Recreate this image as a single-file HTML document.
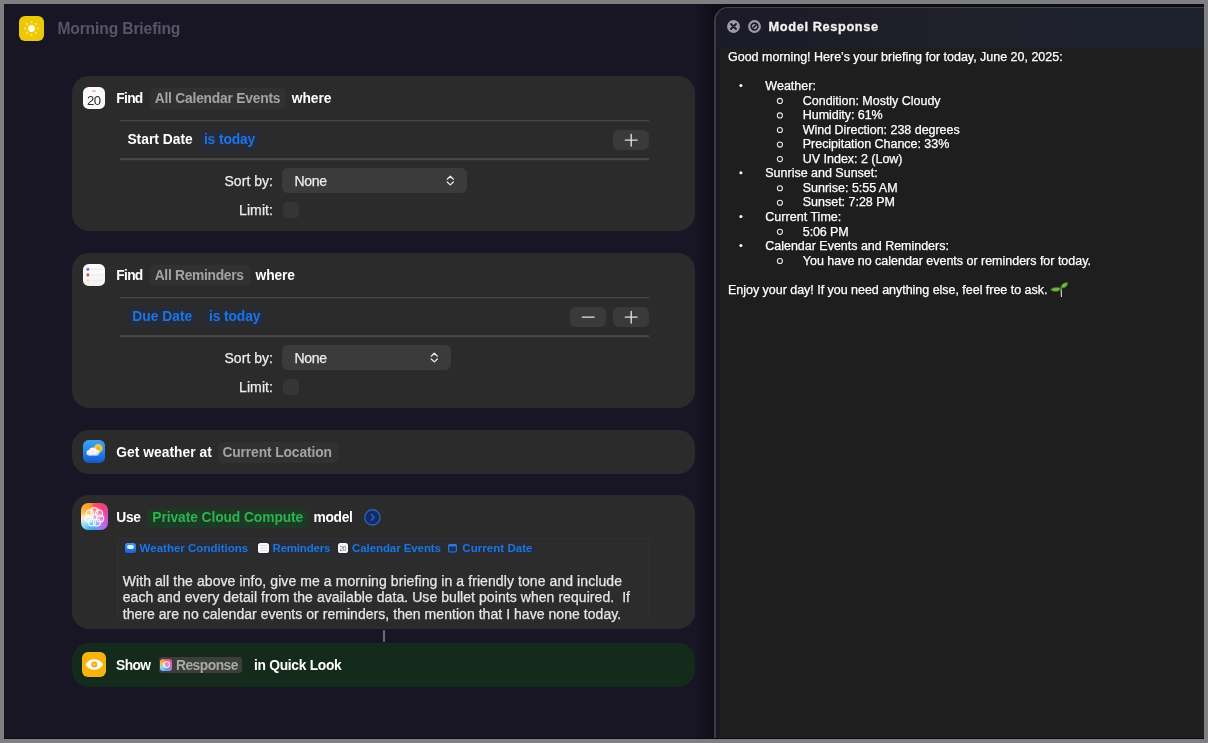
<!DOCTYPE html>
<html>
<head>
<meta charset="utf-8">
<title>Morning Briefing</title>
<style>
*{box-sizing:border-box;margin:0;padding:0}
html,body{width:1208px;height:743px;overflow:hidden;background:#181624}
body{font-family:"Liberation Sans",sans-serif;position:relative;color:#fff}
#layer{position:absolute;left:0;top:0;width:1208px;height:743px;will-change:transform;transform:translateZ(0)}
#frame{position:absolute;left:0;top:0;width:1208px;height:743px;border:4px solid #7f7f81;z-index:50}
.abs{position:absolute}
.t{position:absolute;white-space:pre;line-height:20px;height:20px}
.card{position:absolute;left:72.3px;width:623px;background:#2b2b2b;border-radius:17px}
.pill{position:absolute;border-radius:5px;background:#313131}
.bpill{position:absolute;border-radius:5px;background:#272a37}
.line{position:absolute;left:120px;width:528.5px;height:2px;background:linear-gradient(#474747 0 1px,#343434 1px 2px)}
.line2{position:absolute;left:120px;width:528.5px;height:3px;background:linear-gradient(#434343 0 1px,#494949 1px 2px,#313131 2px 3px)}
.btn{position:absolute;width:35.6px;height:19.5px;border-radius:6px;background:#3a3a3a}
.sel{position:absolute;left:282px;height:25px;border-radius:6px;background:#3b3b3b}
.chk{position:absolute;left:282.5px;width:16px;height:16px;border-radius:4.5px;background:#353535}
svg{position:absolute;overflow:visible}
#panel{position:absolute;left:714px;top:7px;width:496px;height:740px;background:#1e1e1e;border:1px solid #42424a;border-left:2px solid #3c3c49;border-radius:14px 0 0 0;overflow:hidden}
#pstrip{position:absolute;left:0;top:40px;width:4px;height:700px;background:linear-gradient(90deg,#181723 0 3px,#1b1b21 3px 4px)}
#ptitle{position:absolute;left:0;top:0;width:100%;height:40px;background:linear-gradient(90deg,#1b1a27 0%,#1f202a 45%,#1c222c 100%)}
</style>
</head>
<body>
<div id="layer">

<!-- header -->
<div class="abs" style="left:19px;top:15.5px;width:25px;height:25px;border-radius:6px;background:#ecc80a"></div>
<svg style="left:19px;top:15.5px" width="25" height="25" viewBox="0 0 25 25">
 <circle cx="12.5" cy="12.5" r="3.4" fill="#fffbe0"/>
 <g fill="#ffe840">
  <circle cx="12.5" cy="6.1" r="1.15"/><circle cx="12.5" cy="18.9" r="1.15"/>
  <circle cx="6.1" cy="12.5" r="1.15"/><circle cx="18.9" cy="12.5" r="1.15"/>
  <circle cx="8" cy="8" r="1.15"/><circle cx="17" cy="8" r="1.15"/>
  <circle cx="8" cy="17" r="1.15"/><circle cx="17" cy="17" r="1.15"/>
 </g>
</svg>

<!-- cards -->
<div class="card" style="top:75.5px;height:155.5px"></div>
<div class="card" style="top:252.5px;height:155.5px"></div>
<div class="card" style="top:430px;height:43.5px"></div>
<div class="card" style="top:494.5px;height:134.5px"></div>
<div class="abs" style="left:383px;top:630px;width:2px;height:12px;background:#6c6c74;border-radius:1px"></div>
<div class="card" style="top:643px;height:43.5px;background:#142a1b"></div>

<!-- card 1 shapes -->
<div class="pill" style="left:150px;top:88px;width:136px;height:21px"></div>
<div class="line" style="top:120px"></div>
<div class="line2" style="top:158px"></div>
<div class="bpill" style="left:199px;top:129.5px;width:61px;height:20px"></div>
<div class="btn" style="left:613px;top:130px"></div>
<div class="sel" style="top:168px;width:185px"></div>
<div class="chk" style="top:202px"></div>

<!-- card 2 shapes -->
<div class="pill" style="left:150px;top:265px;width:100px;height:21px"></div>
<div class="line" style="top:297px"></div>
<div class="line2" style="top:335px"></div>
<div class="bpill" style="left:127px;top:306.5px;width:70px;height:20px"></div>
<div class="bpill" style="left:204px;top:306.5px;width:61px;height:20px"></div>
<div class="btn" style="left:570px;top:307px"></div>
<div class="btn" style="left:613px;top:307px"></div>
<div class="sel" style="top:345px;width:169px"></div>
<div class="chk" style="top:379px"></div>

<!-- card 3 shapes -->
<div class="pill" style="left:217.5px;top:442px;width:120px;height:20.5px"></div>

<!-- card 4 shapes -->
<div class="pill" style="left:147px;top:508.5px;width:161px;height:19px;background:#1d3a26"></div>
<div class="abs" style="left:117px;top:538px;width:533px;height:83px;background:#2c2c2c;border:1px solid #303030;border-bottom-color:#2c2c2c"></div>

<!-- card 5 shapes -->
<div class="pill" style="left:158.5px;top:657px;width:83px;height:15.5px;border-radius:3px;background:#3a3f3b"></div>

<!--ICONS_BEGIN-->
<!-- calendar icon card1 -->
<div class="abs" style="left:82.7px;top:86.5px;width:22.6px;height:22.6px;border-radius:5.6px;background:#fbfafa"></div>
<div class="abs" style="left:82.7px;top:94.2px;width:22.6px;height:13px;line-height:13px;font-size:13.2px;letter-spacing:-0.6px;text-align:center;color:#2a2a2a;text-indent:-0.4px">20</div>
<div class="abs" style="left:91.5px;top:90.4px;width:4.6px;height:1.6px;background:#f5b3c0;border-radius:1px"></div>

<!-- reminders icon card2 -->
<div class="abs" style="left:82.7px;top:263.6px;width:22.6px;height:22.6px;border-radius:5.6px;background:linear-gradient(180deg,#fdfdfd,#f4f2f0)"></div>
<svg style="left:82.7px;top:263.6px" width="22.6" height="22.6" viewBox="0 0 22.6 22.6">
 <circle cx="4.9" cy="5.3" r="1.55" fill="#5f7fc6"/><circle cx="4.9" cy="10.9" r="1.55" fill="#c45a6a"/><circle cx="4.9" cy="16.3" r="1.5" fill="#f6d9b8"/>
 <g stroke="#e6e6e8" stroke-width="0.9"><path d="M8.6 5.3H20M8.6 10.9H20M8.6 16.3H20"/></g>
</svg>

<!-- weather icon card3 -->
<div class="abs" style="left:82.7px;top:440.2px;width:22.5px;height:23px;border-radius:5.6px;background:linear-gradient(180deg,#3fa2f2 0%,#2b88e8 45%,#1556cb 100%)"></div>
<svg style="left:82.7px;top:440.2px" width="22.5" height="23" viewBox="0 0 22.5 23">
 <defs><radialGradient id="sun"><stop offset="0" stop-color="#f9a60e"/><stop offset="0.5" stop-color="#f9c426"/><stop offset="0.8" stop-color="#f6e25a" stop-opacity="0.7"/><stop offset="1" stop-color="#f6e25a" stop-opacity="0"/></radialGradient>
 <linearGradient id="cl" x1="0" y1="0" x2="0.3" y2="1"><stop offset="0" stop-color="#ffffff"/><stop offset="0.55" stop-color="#eef4fb"/><stop offset="1" stop-color="#a9cdf3"/></linearGradient></defs>
 <circle cx="15.2" cy="8.4" r="5" fill="url(#sun)"/>
 <g fill="url(#cl)"><circle cx="6.4" cy="12.8" r="2.9"/><circle cx="9.8" cy="11.1" r="3.7"/><circle cx="13.4" cy="12.7" r="3"/><rect x="6.4" y="12.6" width="7" height="3.1"/></g>
</svg>

<!-- apple intelligence icon card4 -->
<div class="abs" style="left:80.6px;top:503.2px;width:27px;height:27px;border-radius:7.2px;background:conic-gradient(from 0deg at 50% 52%,#f4506a 0deg,#ef3f78 40deg,#e04cc0 90deg,#b46af0 135deg,#5a9ff4 175deg,#3fb0f6 200deg,#9adcf8 235deg,#f8efcf 265deg,#f9b637 300deg,#f79a35 340deg,#f4506a 360deg)"></div>
<svg style="left:80.6px;top:503.2px" width="27" height="27" viewBox="0 0 27 27">
 <defs><radialGradient id="aig"><stop offset="0" stop-color="#fff" stop-opacity="0.5"/><stop offset="0.65" stop-color="#fff" stop-opacity="0.3"/><stop offset="1" stop-color="#fff" stop-opacity="0"/></radialGradient></defs>
 <circle cx="13.4" cy="14.2" r="11.5" fill="url(#aig)"/>
 <g fill="none" stroke="#fff" stroke-width="1.1" stroke-opacity="0.95"><circle cx="13.40" cy="8.30" r="3.5"/><circle cx="18.01" cy="10.52" r="3.5"/><circle cx="19.15" cy="15.51" r="3.5"/><circle cx="15.96" cy="19.52" r="3.5"/><circle cx="10.84" cy="19.52" r="3.5"/><circle cx="7.65" cy="15.51" r="3.5"/><circle cx="8.79" cy="10.52" r="3.5"/></g>
</svg>

<!-- circle chevron -->
<svg style="left:363.7px;top:509.3px" width="16.8" height="16.8" viewBox="0 0 16.8 16.8">
 <circle cx="8.4" cy="8.4" r="7.6" fill="#0f2b6a" stroke="#2e61b0" stroke-width="1.4"/>
 <path d="M7.3 5.5L10.1 8.4L7.3 11.3" fill="none" stroke="#3b5caa" stroke-width="1.5" stroke-linecap="round" stroke-linejoin="round"/>
</svg>

<!-- variable chips bg + mini icons -->
<div class="abs" style="left:122px;top:541px;width:129px;height:14px;border-radius:3px;background:#282b33"></div>
<div class="abs" style="left:256px;top:541px;width:77px;height:14px;border-radius:3px;background:#282b33"></div>
<div class="abs" style="left:335.5px;top:541px;width:108px;height:14px;border-radius:3px;background:#282b33"></div>
<div class="abs" style="left:446px;top:541px;width:89px;height:14px;border-radius:3px;background:#282b33"></div>

<div class="abs" style="left:124.6px;top:542.6px;width:11px;height:10.2px;border-radius:2.6px;background:linear-gradient(180deg,#3b97ee,#1b5fd0)"></div>
<div class="abs" style="left:127px;top:545.2px;width:6.6px;height:4.2px;border-radius:2px;background:#d8f0ee"></div>
<div class="abs" style="left:258px;top:542.6px;width:11px;height:10.2px;border-radius:2.6px;background:#fafafa"></div>
<div class="abs" style="left:260px;top:544.6px;width:7px;height:1px;background:#dcdcdc;box-shadow:0 2.6px 0 #dcdcdc,0 5.2px 0 #dcdcdc"></div>
<div class="abs" style="left:337.5px;top:542.8px;width:10.6px;height:10px;border-radius:2.6px;background:#faf6f7"></div>
<div class="abs" style="left:337.5px;top:545.3px;width:10.6px;height:7px;line-height:7px;font-size:6.6px;letter-spacing:-0.3px;text-align:center;color:#6a6a6e">20</div>
<svg style="left:448px;top:543.6px" width="9" height="8.6" viewBox="0 0 9 8.6">
 <rect x="0.6" y="0.6" width="7.8" height="7.4" rx="1.4" fill="#1c3158" stroke="#2f7ad8" stroke-width="1.1"/>
 <rect x="0.6" y="0.6" width="7.8" height="1.8" fill="#2f7ad8"/>
</svg>

<!-- eye icon card5 -->
<div class="abs" style="left:81.7px;top:652.2px;width:24.8px;height:25px;border-radius:6px;background:#f8b40c"></div>
<svg style="left:81.7px;top:652.2px" width="24.8" height="25" viewBox="0 0 24.8 25">
 <path d="M3.6 12.6C6 8.6 9 7.3 12.3 7.3S18.6 8.6 21.2 12.6C18.6 16.6 15.6 17.9 12.3 17.9S6 16.6 3.6 12.6Z" fill="#fffdf0"/>
 <circle cx="12.3" cy="12.4" r="2.9" fill="#f5a20e"/>
 <circle cx="12.3" cy="12.4" r="1.3" fill="#fbd070"/>
</svg>

<!-- response mini icon -->
<div class="abs" style="left:160.2px;top:658.6px;width:12px;height:12.4px;border-radius:3px;background:conic-gradient(from 0deg,#f05470 0deg,#e05ac8 90deg,#5aa4f4 180deg,#8fd4f8 240deg,#f9b84a 300deg,#f05470 360deg)"></div>
<div class="abs" style="left:162.6px;top:661.2px;width:7.2px;height:7.2px;border-radius:50%;border:1.3px solid rgba(255,255,255,.9);background:rgba(255,255,255,.25)"></div>

<!-- +/- glyphs and select chevrons -->
<svg style="left:624.8px;top:133.7px" width="12.4" height="12.4" viewBox="0 0 11 11"><path d="M5.5 0.3V10.7M0.3 5.5H10.7" stroke="#e2e2e2" stroke-width="1.2" stroke-linecap="round"/></svg>
<svg style="left:624.8px;top:310.7px" width="12.4" height="12.4" viewBox="0 0 11 11"><path d="M5.5 0.3V10.7M0.3 5.5H10.7" stroke="#e2e2e2" stroke-width="1.2" stroke-linecap="round"/></svg>
<svg style="left:581.8px;top:310.7px" width="12.4" height="12.4" viewBox="0 0 11 11"><path d="M0.3 5.5H10.7" stroke="#e2e2e2" stroke-width="1.2" stroke-linecap="round"/></svg>
<svg style="left:446.4px;top:175px" width="8.6" height="11.2" viewBox="0 0 9 11.6"><path d="M1.3 4.3L4.5 1.3L7.7 4.3M1.3 7.3L4.5 10.3L7.7 7.3" fill="none" stroke="#ececec" stroke-width="1.35" stroke-linecap="round" stroke-linejoin="round"/></svg>
<svg style="left:430.4px;top:352px" width="8.6" height="11.2" viewBox="0 0 9 11.6"><path d="M1.3 4.3L4.5 1.3L7.7 4.3M1.3 7.3L4.5 10.3L7.7 7.3" fill="none" stroke="#ececec" stroke-width="1.35" stroke-linecap="round" stroke-linejoin="round"/></svg>
<!--ICONS_END-->

<!-- right panel -->
<div class="abs" style="left:737px;top:4px;width:467px;height:4px;background:linear-gradient(90deg,#0f0e18 0,#0d0d13 60px,#0c0d12 100%)"></div>
<div class="abs" style="left:697px;top:4px;width:40px;height:735px;background:linear-gradient(90deg,rgba(8,7,14,0) 0,rgba(8,7,14,.55) 17px,rgba(8,7,14,.55) 40px)"></div>
<div id="panel"><div id="ptitle"></div><div id="pstrip"></div></div>
<div class="abs" style="left:4px;top:737.5px;width:1200px;height:2px;background:#0b0b0d"></div>

<!--PICONS_BEGIN-->
<!-- panel title icons -->
<svg style="left:726.6px;top:20.2px" width="13" height="13" viewBox="0 0 13 13"><circle cx="6.5" cy="6.5" r="6.4" fill="#9d9ca8"/><path d="M4 4L9 9M9 4L4 9" stroke="#1d1c28" stroke-width="1.9" stroke-linecap="round"/></svg>
<svg style="left:747.5px;top:20.2px" width="13" height="13" viewBox="0 0 13 13"><circle cx="6.5" cy="6.5" r="6.4" fill="#9d9ca8"/><circle cx="6.5" cy="6.5" r="3.4" fill="none" stroke="#1d1c28" stroke-width="1.6"/><path d="M4.2 8.8L8.8 4.2" stroke="#1d1c28" stroke-width="1.6"/></svg>
<!-- seedling emoji -->
<svg style="left:1050px;top:281px" width="18.4" height="16" viewBox="0 0 18.4 16">
 <path d="M11.4 15.4C11.4 11.4 11.3 9 11 6.8" fill="none" stroke="#cfe2c2" stroke-width="1.15" stroke-linecap="round"/>
 <path d="M10.9 7.7C8.2 5.5 3.6 5.8 0.5 8.6C3.6 11.6 8.4 11.2 10.9 7.7Z" fill="#74b238" stroke="#2f5f16" stroke-width="0.9"/>
 <path d="M10.9 6.9C10.8 3.4 14.2 1.1 17.9 1.7C17.7 5.3 14.5 7.6 10.9 6.9Z" fill="#7ab93c" stroke="#2f5f16" stroke-width="0.9"/>
</svg>
<!--PICONS_END-->
<div class="t" style="left:57.40px;top:19px;font-size:15.6px;color:#575668;letter-spacing:-0.117px;font-weight:bold;">Morning Briefing</div>
<div class="t" style="left:116.30px;top:89px;font-size:13.8px;color:#ffffff;letter-spacing:-0.708px;font-weight:bold;">Find</div>
<div class="t" style="left:154.70px;top:89px;font-size:13.8px;color:#a3a3a3;letter-spacing:-0.211px;font-weight:bold;">All Calendar Events</div>
<div class="t" style="left:291.70px;top:89px;font-size:13.8px;color:#ffffff;letter-spacing:-0.019px;font-weight:bold;">where</div>
<div class="t" style="left:127.40px;top:130px;font-size:13.8px;color:#ffffff;letter-spacing:0.014px;font-weight:bold;">Start Date</div>
<div class="t" style="left:203.90px;top:130px;font-size:13.8px;color:#1a74ea;letter-spacing:-0.106px;font-weight:bold;">is today</div>
<div class="t" style="left:224.50px;top:171px;font-size:14px;color:#ececec;letter-spacing:0.036px;-webkit-text-stroke:0.25px #ececec;">Sort by:</div>
<div class="t" style="left:294.50px;top:171px;font-size:14px;color:#ececec;letter-spacing:-0.323px;-webkit-text-stroke:0.25px #ececec;">None</div>
<div class="t" style="left:239.00px;top:200px;font-size:14px;color:#ececec;letter-spacing:0.109px;-webkit-text-stroke:0.25px #ececec;">Limit:</div>
<div class="t" style="left:116.30px;top:266px;font-size:13.8px;color:#ffffff;letter-spacing:-0.708px;font-weight:bold;">Find</div>
<div class="t" style="left:154.70px;top:266px;font-size:13.8px;color:#a3a3a3;letter-spacing:-0.290px;font-weight:bold;">All Reminders</div>
<div class="t" style="left:255.50px;top:266px;font-size:13.8px;color:#ffffff;letter-spacing:-0.094px;font-weight:bold;">where</div>
<div class="t" style="left:132.30px;top:307px;font-size:13.8px;color:#1a74ea;letter-spacing:0.012px;font-weight:bold;">Due Date</div>
<div class="t" style="left:209.00px;top:307px;font-size:13.8px;color:#1a74ea;letter-spacing:-0.106px;font-weight:bold;">is today</div>
<div class="t" style="left:224.50px;top:348px;font-size:14px;color:#ececec;letter-spacing:0.036px;-webkit-text-stroke:0.25px #ececec;">Sort by:</div>
<div class="t" style="left:294.50px;top:348px;font-size:14px;color:#ececec;letter-spacing:-0.323px;-webkit-text-stroke:0.25px #ececec;">None</div>
<div class="t" style="left:239.00px;top:377px;font-size:14px;color:#ececec;letter-spacing:0.109px;-webkit-text-stroke:0.25px #ececec;">Limit:</div>
<div class="t" style="left:116.20px;top:443px;font-size:13.8px;color:#ffffff;letter-spacing:0.048px;font-weight:bold;">Get weather at</div>
<div class="t" style="left:222.40px;top:443px;font-size:13.8px;color:#a3a3a3;letter-spacing:-0.104px;font-weight:bold;">Current Location</div>
<div class="t" style="left:116.30px;top:508px;font-size:13.8px;color:#ffffff;letter-spacing:-0.356px;font-weight:bold;">Use</div>
<div class="t" style="left:152.30px;top:508px;font-size:13.8px;color:#2eb24e;letter-spacing:-0.078px;font-weight:bold;">Private Cloud Compute</div>
<div class="t" style="left:313.60px;top:508px;font-size:13.8px;color:#ffffff;letter-spacing:-0.360px;font-weight:bold;">model</div>
<div class="t" style="left:139.60px;top:538px;font-size:11.5px;color:#1b76e0;letter-spacing:0.011px;font-weight:bold;">Weather Conditions</div>
<div class="t" style="left:272.60px;top:538px;font-size:11.5px;color:#1b76e0;letter-spacing:-0.217px;font-weight:bold;">Reminders</div>
<div class="t" style="left:352.00px;top:538px;font-size:11.5px;color:#1b76e0;letter-spacing:-0.080px;font-weight:bold;">Calendar Events</div>
<div class="t" style="left:462.30px;top:538px;font-size:11.5px;color:#1b76e0;letter-spacing:0.049px;font-weight:bold;">Current Date</div>
<div class="t" style="left:122.70px;top:571px;font-size:14px;color:#e6e6e6;letter-spacing:0.082px;-webkit-text-stroke:0.25px #e6e6e6;">With all the above info, give me a morning briefing in a friendly tone and include</div>
<div class="t" style="left:122.70px;top:587px;font-size:14px;color:#e6e6e6;letter-spacing:0.065px;-webkit-text-stroke:0.25px #e6e6e6;">each and every detail from the available data. Use bullet points when required.  If</div>
<div class="t" style="left:122.70px;top:604px;font-size:14px;color:#e6e6e6;letter-spacing:0.048px;-webkit-text-stroke:0.25px #e6e6e6;">there are no calendar events or reminders, then mention that I have none today.</div>
<div class="t" style="left:116.10px;top:656px;font-size:13.8px;color:#ffffff;letter-spacing:-0.632px;font-weight:bold;">Show</div>
<div class="t" style="left:176.00px;top:656px;font-size:13.8px;color:#a9a9a9;letter-spacing:-0.508px;font-weight:bold;">Response</div>
<div class="t" style="left:254.00px;top:656px;font-size:13.8px;color:#ffffff;letter-spacing:-0.286px;font-weight:bold;">in Quick Look</div>
<div class="t" style="left:768.60px;top:17px;font-size:12.8px;color:#f2f2f2;letter-spacing:0.601px;font-weight:bold;-webkit-text-stroke:0.3px #f2f2f2;">Model Response</div>
<div class="t" style="left:728.00px;top:47px;font-size:12.5px;color:#ffffff;letter-spacing:-0.008px;-webkit-text-stroke:0.25px #fff;">Good morning! Here’s your briefing for today, June 20, 2025:</div>
<div class="t" style="left:765.30px;top:76px;font-size:12.5px;color:#ffffff;letter-spacing:0.029px;-webkit-text-stroke:0.25px #fff;">Weather:</div>
<div class="t" style="left:802.80px;top:91px;font-size:12.5px;color:#ffffff;letter-spacing:-0.020px;-webkit-text-stroke:0.25px #fff;">Condition: Mostly Cloudy</div>
<div class="t" style="left:802.80px;top:105px;font-size:12.5px;color:#ffffff;letter-spacing:-0.058px;-webkit-text-stroke:0.25px #fff;">Humidity: 61%</div>
<div class="t" style="left:802.80px;top:120px;font-size:12.5px;color:#ffffff;letter-spacing:-0.032px;-webkit-text-stroke:0.25px #fff;">Wind Direction: 238 degrees</div>
<div class="t" style="left:802.80px;top:134px;font-size:12.5px;color:#ffffff;letter-spacing:-0.034px;-webkit-text-stroke:0.25px #fff;">Precipitation Chance: 33%</div>
<div class="t" style="left:802.80px;top:149px;font-size:12.5px;color:#ffffff;letter-spacing:-0.022px;-webkit-text-stroke:0.25px #fff;">UV Index: 2 (Low)</div>
<div class="t" style="left:765.30px;top:163px;font-size:12.5px;color:#ffffff;letter-spacing:-0.010px;-webkit-text-stroke:0.25px #fff;">Sunrise and Sunset:</div>
<div class="t" style="left:802.80px;top:178px;font-size:12.5px;color:#ffffff;letter-spacing:-0.027px;-webkit-text-stroke:0.25px #fff;">Sunrise: 5:55 AM</div>
<div class="t" style="left:802.80px;top:192px;font-size:12.5px;color:#ffffff;letter-spacing:-0.016px;-webkit-text-stroke:0.25px #fff;">Sunset: 7:28 PM</div>
<div class="t" style="left:765.30px;top:207px;font-size:12.5px;color:#ffffff;letter-spacing:0.023px;-webkit-text-stroke:0.25px #fff;">Current Time:</div>
<div class="t" style="left:802.80px;top:222px;font-size:12.5px;color:#ffffff;letter-spacing:-0.110px;-webkit-text-stroke:0.25px #fff;">5:06 PM</div>
<div class="t" style="left:765.30px;top:236px;font-size:12.5px;color:#ffffff;letter-spacing:-0.018px;-webkit-text-stroke:0.25px #fff;">Calendar Events and Reminders:</div>
<div class="t" style="left:802.80px;top:251px;font-size:12.5px;color:#ffffff;letter-spacing:-0.019px;-webkit-text-stroke:0.25px #fff;">You have no calendar events or reminders for today.</div>
<div class="t" style="left:728.00px;top:280px;font-size:12.5px;color:#ffffff;letter-spacing:-0.028px;-webkit-text-stroke:0.25px #fff;">Enjoy your day! If you need anything else, feel free to ask.</div>
<svg style="left:0;top:0" width="1208" height="743" viewBox="0 0 1208 743">
<circle cx="740.9" cy="85.50" r="1.55" fill="#fff"/>
<circle cx="740.9" cy="172.80" r="1.55" fill="#fff"/>
<circle cx="740.9" cy="216.45" r="1.55" fill="#fff"/>
<circle cx="740.9" cy="245.55" r="1.55" fill="#fff"/>
<circle cx="779.9" cy="100.90" r="2.55" fill="none" stroke="#ececec" stroke-width="1.05"/>
<circle cx="779.9" cy="115.45" r="2.55" fill="none" stroke="#ececec" stroke-width="1.05"/>
<circle cx="779.9" cy="130.00" r="2.55" fill="none" stroke="#ececec" stroke-width="1.05"/>
<circle cx="779.9" cy="144.55" r="2.55" fill="none" stroke="#ececec" stroke-width="1.05"/>
<circle cx="779.9" cy="159.10" r="2.55" fill="none" stroke="#ececec" stroke-width="1.05"/>
<circle cx="779.9" cy="188.20" r="2.55" fill="none" stroke="#ececec" stroke-width="1.05"/>
<circle cx="779.9" cy="202.75" r="2.55" fill="none" stroke="#ececec" stroke-width="1.05"/>
<circle cx="779.9" cy="231.85" r="2.55" fill="none" stroke="#ececec" stroke-width="1.05"/>
<circle cx="779.9" cy="260.95" r="2.55" fill="none" stroke="#ececec" stroke-width="1.05"/>
</svg>

</div>
<div id="frame"></div>
</body>
</html>
